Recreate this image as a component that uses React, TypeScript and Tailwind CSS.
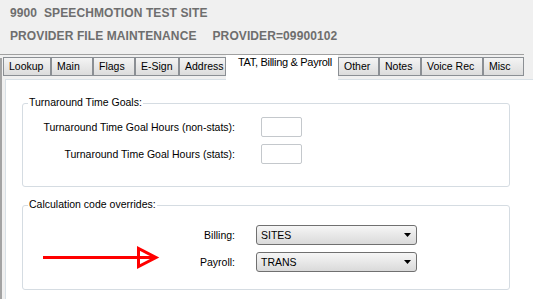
import React from "react";

const tabs: { label: string; w: string; active?: boolean }[] = [
  { label: "Lookup", w: "w-[48px]" },
  { label: "Main", w: "w-[42px]" },
  { label: "Flags", w: "w-[42px]" },
  { label: "E-Sign", w: "w-[44px]" },
  { label: "Address", w: "w-[47px]" },
  { label: "TAT, Billing & Payroll", w: "w-[112px]", active: true },
  { label: "Other", w: "w-[41px]" },
  { label: "Notes", w: "w-[42px]" },
  { label: "Voice Rec", w: "w-[62px]" },
  { label: "Misc", w: "w-[41px]" },
];

function Select({ value }: { value: string }) {
  return (
    <div className="w-[161px] h-[20px] rounded-[3px] border border-[#707070] bg-gradient-to-b from-[#f6f6f6] to-[#dadada] flex items-center justify-between pl-[4px] pr-[5px]">
      <span className="text-black">{value}</span>
      <svg width="7" height="4" viewBox="0 0 7 4">
        <polygon points="0,0 7,0 3.5,4" fill="#000" />
      </svg>
    </div>
  );
}

export default function App() {
  return (
    <div
      className="w-[533px] h-[299px] overflow-hidden bg-[#f0f0f0] text-[10.5px] leading-none"
      style={{ fontFamily: '"Liberation Sans", Arial, sans-serif' }}
    >
      {/* Header */}
      <div className="pt-[5px] pl-[10px] flex flex-col gap-[8px] text-[#6e6e6e] font-bold text-[12px] tracking-[0.1px]">
        <div className="h-[15px] flex items-center whitespace-pre">9900  SPEECHMOTION TEST SITE</div>
        <div className="h-[15px] flex items-center">
          <span>PROVIDER FILE MAINTENANCE</span>
          <span className="ml-[16px]">PROVIDER=09900102</span>
        </div>
      </div>

      {/* Top line */}
      <div className="mt-[11px] h-px w-[524px] bg-[#a0a0a0]" />

      <div className="flex">
        <div className="w-[2px] mt-[3px] bg-[#a3a3a3] h-[260px]" />
        <div className="ml-[1px] flex-1 flex flex-col">
          {/* Tabs */}
          <div className="flex items-start h-[24px] relative z-10 text-[10.5px]">
            {tabs.map((t) =>
              t.active ? (
                <div
                  key={t.label}
                  className={`${t.w} h-[25px] bg-white pl-[12px] pt-[2px] text-black whitespace-nowrap text-[11px]`}
                >
                  <span className="tracking-[-0.3px]">{t.label}</span>
                </div>
              ) : (
                <div
                  key={t.label}
                  className={`${t.w} mt-[2px] h-[19px] border border-[#8b8f94] bg-gradient-to-b from-[#f4f4f4] to-[#dcdcdc] pl-[5px] flex items-center text-black whitespace-nowrap overflow-hidden`}
                >
                  {t.label}
                </div>
              )
            )}
          </div>

          {/* Panel */}
          <div className="ml-[2px] bg-white border-t border-l border-[#d8e0e6] h-[230px] pl-[16px] pt-[23px]">
            {/* Group 1 */}
            <div className="relative w-[488px] h-[84px] border border-[#d5dce2] rounded-[3px] pt-[13px]">
              <span className="absolute -top-[7px] left-[5px] bg-white px-[1px] text-black">
                Turnaround Time Goals:
              </span>
              <div className="flex flex-col gap-[7px]">
                <div className="flex items-center">
                  <span className="w-[212px] text-right text-black">Turnaround Time Goal Hours (non-stats):</span>
                  <div className="ml-[26px] w-[41px] h-[20px] border border-[#c4c8cc] rounded-[2px] bg-white" />
                </div>
                <div className="flex items-center">
                  <span className="w-[212px] text-right text-black">Turnaround Time Goal Hours (stats):</span>
                  <div className="ml-[26px] w-[41px] h-[20px] border border-[#c4c8cc] rounded-[2px] bg-white" />
                </div>
              </div>
            </div>

            {/* Group 2 */}
            <div className="relative mt-[18px] w-[488px] h-[85px] border border-[#d5dce2] rounded-[3px] pt-[19px]">
              <span className="absolute -top-[7px] left-[5px] bg-white px-[1px] text-black">
                Calculation code overrides:
              </span>
              <svg
                className="absolute left-[17px] top-[38px]"
                width="122"
                height="28"
                viewBox="0 0 122 28"
              >
                <line x1="3" y1="13.5" x2="114" y2="13.5" stroke="#ff0000" strokeWidth="3" />
                <polygon
                  points="98.5,4.5 98.5,22.5 116,13.5"
                  fill="none"
                  stroke="#ff0000"
                  strokeWidth="3"
                />
              </svg>
              <div className="flex flex-col gap-[7px]">
                <div className="flex items-center">
                  <span className="w-[212px] text-right text-black">Billing:</span>
                  <div className="ml-[21px]">
                    <Select value="SITES" />
                  </div>
                </div>
                <div className="flex items-center">
                  <span className="w-[212px] text-right text-black">Payroll:</span>
                  <div className="ml-[21px]">
                    <Select value="TRANS" />
                  </div>
                </div>
              </div>
            </div>
          </div>
        </div>
      </div>
    </div>
  );
}
